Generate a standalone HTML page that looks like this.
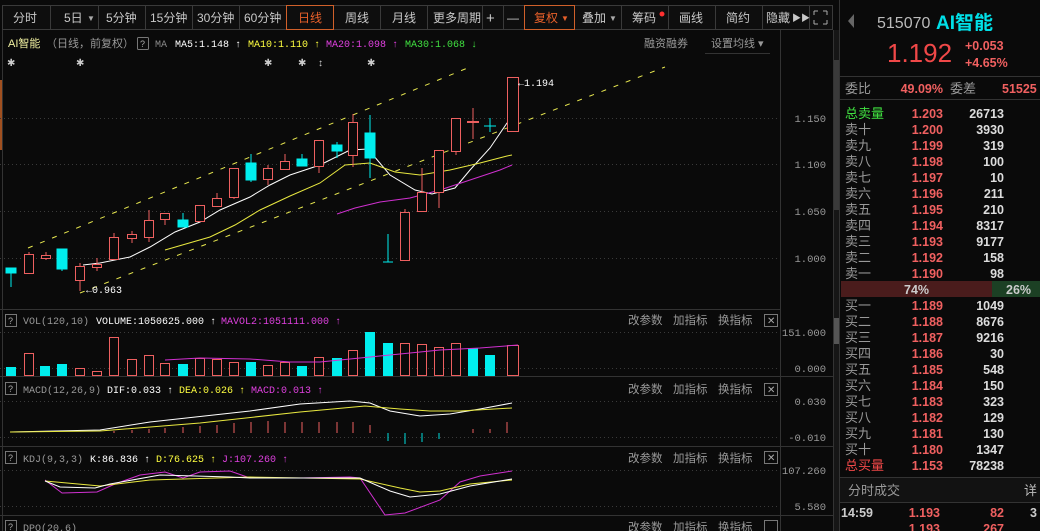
<!DOCTYPE html>
<html><head><meta charset="utf-8"><style>
html,body{margin:0;padding:0;background:#0a0a0a;width:1040px;height:531px;overflow:hidden}
svg{display:block}
text{font-family:"Liberation Sans","Noto Sans CJK SC",sans-serif}
.m text, text.m{font-family:"Liberation Mono","Noto Sans CJK SC",monospace}
</style></head><body>
<svg width="1040" height="531" viewBox="0 0 1040 531">
<rect width="1040" height="531" fill="#0a0a0a"/>
<!-- toolbar -->
<g stroke="#3a3a3a" fill="#0e0e0e">
<rect x="2.5" y="5.5" width="830" height="24"/>
</g>
<g stroke="#3a3a3a">
<line x1="50.5" y1="6" x2="50.5" y2="29"/><line x1="98.5" y1="6" x2="98.5" y2="29"/><line x1="145.5" y1="6" x2="145.5" y2="29"/><line x1="192.5" y1="6" x2="192.5" y2="29"/><line x1="239.5" y1="6" x2="239.5" y2="29"/><line x1="333.5" y1="6" x2="333.5" y2="29"/><line x1="380.5" y1="6" x2="380.5" y2="29"/><line x1="427.5" y1="6" x2="427.5" y2="29"/><line x1="482.5" y1="6" x2="482.5" y2="29"/><line x1="503.5" y1="6" x2="503.5" y2="29"/><line x1="621.5" y1="6" x2="621.5" y2="29"/><line x1="668.5" y1="6" x2="668.5" y2="29"/><line x1="715.5" y1="6" x2="715.5" y2="29"/><line x1="762.5" y1="6" x2="762.5" y2="29"/><line x1="809.5" y1="6" x2="809.5" y2="29"/>
</g>
<rect x="286.5" y="5.5" width="47" height="24" fill="none" stroke="#d0602a"/>
<rect x="524.5" y="5.5" width="50" height="24" fill="none" stroke="#d0602a"/>
<g font-size="12" fill="#c8c8c8">
<text x="13" y="22">分时</text>
<text x="64" y="22">5日</text><text x="87" y="21" font-size="8" fill="#aaa">▼</text>
<text x="106" y="22">5分钟</text>
<text x="150" y="22">15分钟</text>
<text x="197" y="22">30分钟</text>
<text x="244" y="22">60分钟</text>
<text x="298" y="22" fill="#e8602a">日线</text>
<text x="345" y="22">周线</text>
<text x="392" y="22">月线</text>
<text x="433" y="22">更多周期</text>
<text x="486" y="23" font-size="15">+</text>
<text x="507" y="22">—</text>
<text x="534" y="22" fill="#e8602a">复权</text><text x="561" y="21" font-size="8" fill="#e8602a">▼</text>
<text x="582" y="22">叠加</text><text x="609" y="21" font-size="8" fill="#aaa">▼</text>
<text x="632" y="22">筹码</text>
<text x="679" y="22">画线</text>
<text x="726" y="22">简约</text>
<text x="766" y="22">隐藏</text><text x="792" y="21" font-size="9">▶▶</text>
</g>
<circle cx="662" cy="14" r="2.5" fill="#ff3030"/>
<g stroke="#aaa" fill="none" stroke-width="1"><path d="M814 11h4M814 11v4M827 11h-4M827 11v4M814 24h4M814 24v-4M827 24h-4M827 24v-4"/></g>

<!-- chart frame lines -->
<g stroke="#333">
<line x1="780.5" y1="30" x2="780.5" y2="531"/>
<line x1="833.5" y1="30" x2="833.5" y2="531"/>
<line x1="839.5" y1="0" x2="839.5" y2="531"/>
<line x1="0" y1="309.5" x2="780" y2="309.5"/>
<line x1="0" y1="376.5" x2="833" y2="376.5"/>
<line x1="0" y1="446.5" x2="833" y2="446.5"/>
<line x1="0" y1="515.5" x2="833" y2="515.5"/>
<line x1="2.5" y1="30" x2="2.5" y2="531"/>
</g>
<rect x="834" y="30" width="5" height="501" fill="#161616"/>
<rect x="834" y="60" width="5" height="150" fill="#3a3a3a"/>
<rect x="834" y="318" width="5" height="26" fill="#555"/>
<rect x="0" y="80" width="2" height="70" fill="#a05020"/>

<!-- header -->
<text x="8" y="47" font-size="11" fill="#f0f0a0">AI智能</text>
<text x="46" y="47" font-size="11" fill="#999">（日线，前复权）</text>
<rect x="137.5" y="37.5" width="11" height="12" fill="none" stroke="#777" rx="1"/>
<text x="140" y="47" font-size="9" fill="#aaa">?</text>
<g class="m" font-size="10">
<text x="155" y="47" fill="#888">MA</text>
<text x="175" y="47" fill="#fff">MA5:1.148 ↑</text>
<text x="248" y="47" fill="#ffff40">MA10:1.110 ↑</text>
<text x="326" y="47" fill="#e040e0">MA20:1.098 ↑</text>
<text x="405" y="47" fill="#40e040">MA30:1.068 ↓</text>
</g>
<text x="644" y="47" font-size="11" fill="#999">融资融券</text>
<text x="711" y="47" font-size="11" fill="#999">设置均线 ▾</text>
<line x1="705" y1="53.5" x2="770" y2="53.5" stroke="#333"/>
<g fill="#ccc" font-size="10"><text x="7" y="66">✱</text><text x="76" y="66">✱</text><text x="264" y="66">✱</text><text x="298" y="66">✱</text><text x="318" y="66">↕</text><text x="367" y="66">✱</text></g>

<!-- grid main -->
<g stroke="#3a3a3a" stroke-dasharray="1,3">
<line x1="0" y1="118.5" x2="780" y2="118.5"/><line x1="0" y1="164.5" x2="780" y2="164.5"/><line x1="0" y1="211.5" x2="780" y2="211.5"/><line x1="0" y1="258.5" x2="780" y2="258.5"/>
<line x1="0" y1="332.5" x2="780" y2="332.5"/><line x1="0" y1="368.5" x2="780" y2="368.5"/>
<line x1="0" y1="401.5" x2="780" y2="401.5"/><line x1="0" y1="437.5" x2="780" y2="437.5"/>
<line x1="0" y1="470.5" x2="780" y2="470.5"/><line x1="0" y1="506.5" x2="780" y2="506.5"/>
</g>
<g class="m" font-size="10.5" fill="#999" text-anchor="end">
<text x="826" y="122">1.150</text><text x="826" y="168">1.100</text><text x="826" y="215">1.050</text><text x="826" y="262">1.000</text>
<text x="826" y="336">151.000</text><text x="826" y="372">0.000</text>
<text x="826" y="405">0.030</text><text x="826" y="441">-0.010</text>
<text x="826" y="474">107.260</text><text x="826" y="510">5.580</text>
</g>

<!-- channel lines -->
<g stroke="#e8e850" stroke-dasharray="5,8" fill="none">
<line x1="28" y1="248" x2="470" y2="67"/>
<line x1="80" y1="293" x2="665" y2="67"/>
</g>

<!-- MA lines -->
<polyline fill="none" stroke="#fff" points="83,265 100,263 130,257 150,247 175,232 200,222 220,210 250,197 270,185 290,175 320,165 350,150 368,149 390,175 415,190 432,194 455,188 470,170 490,148 507,123 515,120"/>
<polyline fill="none" stroke="#e8e840" points="165,250 210,237 235,225 260,210 290,196 320,183 345,165 370,163 395,172 420,175 450,170 480,163 507,156 512,155"/>
<polyline fill="none" stroke="#d030d0" points="337,214 355,208 380,202 410,198 440,190 470,180 500,170 512,165"/>

<!-- candles -->
<g stroke="#ee6060" fill="#0a0a0a">
<line x1="29" y1="252" x2="29" y2="273"/><rect x="24.5" y="254.5" width="9" height="19"/>
<line x1="46" y1="252" x2="46" y2="260"/><rect x="41.5" y="255.5" width="9" height="3"/>
<line x1="80" y1="263" x2="80" y2="291"/><rect x="75.5" y="266.5" width="9" height="14"/>
<line x1="97" y1="258" x2="97" y2="271"/><rect x="92.5" y="264.5" width="9" height="3"/>
<line x1="114" y1="233" x2="114" y2="259"/><rect x="109.5" y="237.5" width="9" height="22"/>
<line x1="132" y1="231" x2="132" y2="243"/><rect x="127.5" y="234.5" width="9" height="4"/>
<line x1="149" y1="210" x2="149" y2="242"/><rect x="144.5" y="220.5" width="9" height="17"/>
<line x1="165" y1="213" x2="165" y2="225"/><rect x="160.5" y="213.5" width="9" height="6"/>
<line x1="200" y1="205" x2="200" y2="221"/><rect x="195.5" y="205.5" width="9" height="16"/>
<line x1="217" y1="193" x2="217" y2="206"/><rect x="212.5" y="198.5" width="9" height="8"/>
<line x1="234" y1="168" x2="234" y2="199"/><rect x="229.5" y="168.5" width="9" height="29"/>
<line x1="268" y1="165" x2="268" y2="185"/><rect x="263.5" y="168.5" width="9" height="11"/>
<line x1="285" y1="154" x2="285" y2="169"/><rect x="280.5" y="161.5" width="9" height="8"/>
<line x1="319" y1="140" x2="319" y2="173"/><rect x="314.5" y="140.5" width="9" height="26"/>
<line x1="353" y1="114" x2="353" y2="167"/><rect x="348.5" y="122.5" width="9" height="33"/>
<line x1="405" y1="209" x2="405" y2="260"/><rect x="400.5" y="212.5" width="9" height="48"/>
<line x1="422" y1="168" x2="422" y2="211"/><rect x="417.5" y="192.5" width="9" height="19"/>
<line x1="439" y1="150" x2="439" y2="208"/><rect x="434.5" y="150.5" width="9" height="42"/>
<line x1="456" y1="118" x2="456" y2="155"/><rect x="451.5" y="118.5" width="9" height="33"/>
<line x1="473" y1="108" x2="473" y2="139"/><rect x="467.5" y="121.5" width="11" height="1"/>
<rect x="507.5" y="77.5" width="11" height="54"/>
</g>
<g fill="#00eeee" stroke="#00eeee">
<line x1="11" y1="268" x2="11" y2="287"/><rect x="6" y="268" width="10" height="5"/>
<line x1="62" y1="249" x2="62" y2="271"/><rect x="57" y="249" width="10" height="20"/>
<line x1="183" y1="213" x2="183" y2="227"/><rect x="178" y="220" width="10" height="7"/>
<line x1="251" y1="154" x2="251" y2="182"/><rect x="246" y="163" width="10" height="17"/>
<line x1="302" y1="154" x2="302" y2="166"/><rect x="297" y="159" width="10" height="7"/>
<line x1="337" y1="142" x2="337" y2="158"/><rect x="332" y="145" width="10" height="6"/>
<line x1="370" y1="115" x2="370" y2="178"/><rect x="365" y="133" width="10" height="25"/>
<line x1="388" y1="234" x2="388" y2="262"/><line x1="383" y1="262" x2="393" y2="262"/>
<line x1="490" y1="118" x2="490" y2="132"/><line x1="484" y1="126" x2="496" y2="126"/>
</g>
<text x="86" y="293" class="m" font-size="10" fill="#fff">←0.963</text>
<text x="518" y="86" class="m" font-size="10" fill="#fff">←1.194</text>

<!-- VOL -->
<rect x="5.5" y="314.5" width="11" height="12" fill="none" stroke="#777"/><text x="8" y="324" font-size="9" fill="#aaa">?</text>
<g class="m" font-size="10">
<text x="23" y="324" fill="#999">VOL(120,10)</text>
<text x="96" y="324" fill="#fff">VOLUME:1050625.000 ↑</text>
<text x="221" y="324" fill="#e040e0">MAVOL2:1051111.000 ↑</text>
</g>
<g font-size="11.5" fill="#999"><text x="628" y="324">改参数</text><text x="673" y="324">加指标</text><text x="718" y="324">换指标</text></g>
<rect x="764.5" y="314.5" width="13" height="12" fill="none" stroke="#777"/><text x="767" y="324" font-size="10" fill="#aaa">✕</text>
<g fill="#0a0a0a" stroke="#ee6060">
<rect x="24.5" y="353.5" width="9" height="22"/><rect x="75.5" y="368.5" width="9" height="7"/><rect x="92.5" y="371.5" width="9" height="4"/><rect x="109.5" y="337.5" width="9" height="38"/><rect x="127.5" y="359.5" width="9" height="16"/><rect x="144.5" y="355.5" width="9" height="20"/><rect x="160.5" y="363.5" width="9" height="12"/><rect x="195.5" y="358.5" width="9" height="17"/><rect x="212.5" y="359.5" width="9" height="16"/><rect x="229.5" y="362.5" width="9" height="13"/><rect x="263.5" y="365.5" width="9" height="10"/><rect x="280.5" y="362.5" width="9" height="13"/><rect x="314.5" y="357.5" width="9" height="18"/><rect x="348.5" y="350.5" width="9" height="25"/><rect x="400.5" y="343.5" width="9" height="32"/><rect x="417.5" y="344.5" width="9" height="31"/><rect x="434.5" y="347.5" width="9" height="28"/><rect x="451.5" y="343.5" width="9" height="32"/><rect x="507.5" y="345.5" width="11" height="30"/>
</g>
<g fill="#00eeee">
<rect x="6" y="367" width="10" height="9"/><rect x="40" y="366" width="10" height="10"/><rect x="57" y="364" width="10" height="12"/><rect x="178" y="364" width="10" height="12"/><rect x="246" y="362" width="10" height="14"/><rect x="297" y="366" width="10" height="10"/><rect x="332" y="358" width="10" height="18"/><rect x="365" y="332" width="10" height="44"/><rect x="383" y="343" width="10" height="33"/><rect x="468" y="348" width="10" height="28"/><rect x="485" y="355" width="10" height="21"/>
</g>
<polyline fill="none" stroke="#d030d0" points="165,360 200,358 250,359 290,362 320,362 340,360 370,357 400,354 440,350 480,348 518,345"/>

<!-- MACD -->
<rect x="5.5" y="382.5" width="11" height="12" fill="none" stroke="#777"/><text x="8" y="392" font-size="9" fill="#aaa">?</text>
<g class="m" font-size="10">
<text x="23" y="393" fill="#999">MACD(12,26,9)</text>
<text x="107" y="393" fill="#fff">DIF:0.033 ↑</text>
<text x="179" y="393" fill="#ffff40">DEA:0.026 ↑</text>
<text x="251" y="393" fill="#e040e0">MACD:0.013 ↑</text>
</g>
<g font-size="11.5" fill="#999"><text x="628" y="393">改参数</text><text x="673" y="393">加指标</text><text x="718" y="393">换指标</text></g>
<rect x="764.5" y="383.5" width="13" height="12" fill="none" stroke="#777"/><text x="767" y="393" font-size="10" fill="#aaa">✕</text>
<g stroke="#ee6060">
<path d="M114 433v-2M132 433v-3M149 433v-4M165 433v-5M183 433v-6M200 433v-7M217 433v-8M234 433v-10M251 433v-11M268 433v-12M285 433v-11M302 433v-11M319 433v-11M337 433v-11M353 433v-11M370 433v-8M473 433v-4M490 433v-4M507 433v-11"/>
</g>
<g stroke="#00dddd"><path d="M388 433v8M405 433v11M422 433v9M439 433v6"/></g>
<polyline fill="none" stroke="#fff" points="10,432 100,430 150,422 250,411 300,404 350,401 370,403 390,411 420,416 450,414 480,409 512,403"/>
<polyline fill="none" stroke="#e8e840" points="10,432 100,431 200,423 300,412 365,406 400,409 430,411 460,411 512,408"/>

<!-- KDJ -->
<rect x="5.5" y="451.5" width="11" height="12" fill="none" stroke="#777"/><text x="8" y="461" font-size="9" fill="#aaa">?</text>
<g class="m" font-size="10">
<text x="23" y="462" fill="#999">KDJ(9,3,3)</text>
<text x="90" y="462" fill="#fff">K:86.836 ↑</text>
<text x="156" y="462" fill="#ffff40">D:76.625 ↑</text>
<text x="222" y="462" fill="#e040e0">J:107.260 ↑</text>
</g>
<g font-size="11.5" fill="#999"><text x="628" y="462">改参数</text><text x="673" y="462">加指标</text><text x="718" y="462">换指标</text></g>
<rect x="764.5" y="451.5" width="13" height="12" fill="none" stroke="#777"/><text x="767" y="461" font-size="10" fill="#aaa">✕</text>
<polyline fill="none" stroke="#d030d0" points="45,480 62,493 97,492 115,484 140,475 165,472 183,478 200,472 230,471 250,478 270,478 300,478 350,477 360,478 385,515 405,513 440,500 460,482 480,476 512,471"/>
<polyline fill="none" stroke="#e8e840" points="45,481 100,486 150,480 250,477 360,479 400,488 420,492 440,491 470,484 512,480"/>
<polyline fill="none" stroke="#fff" points="45,481 60,487 95,488 110,484 160,475 230,477 250,478 350,478 360,478 390,491 410,497 440,494 470,486 512,479"/>

<!-- DPO -->
<rect x="5.5" y="520.5" width="11" height="12" fill="none" stroke="#777"/><text x="8" y="530" font-size="9" fill="#aaa">?</text>
<text x="23" y="531" class="m" font-size="10" fill="#999">DPO(20,6)</text>
<g font-size="11.5" fill="#999"><text x="628" y="531">改参数</text><text x="673" y="531">加指标</text><text x="718" y="531">换指标</text></g>
<rect x="764.5" y="520.5" width="13" height="12" fill="none" stroke="#777"/>

<!-- right panel -->
<rect x="840" y="0" width="200" height="531" fill="#0a0a0a"/>
<path d="M854 14l-6 7 6 7z" fill="#666"/>
<text x="877" y="28" font-size="16" fill="#bbb">515070</text>
<text x="936" y="29" font-size="19" font-weight="bold" fill="#00e0e8">AI智能</text>
<text x="887" y="62" font-size="26" fill="#f04848">1.192</text>
<text x="965" y="50" font-size="12.5" font-weight="bold" fill="#f06060">+0.053</text>
<text x="965" y="67" font-size="12.5" font-weight="bold" fill="#f06060">+4.65%</text>
<line x1="840" y1="76.5" x2="1040" y2="76.5" stroke="#333"/>
<text x="845" y="93" font-size="13" fill="#999">委比</text>
<text x="943" y="93" font-size="12.5" font-weight="bold" fill="#f06060" text-anchor="end">49.09%</text>
<text x="950" y="93" font-size="13" fill="#999">委差</text>
<text x="1002" y="93" font-size="12.5" font-weight="bold" fill="#f06060">51525</text>
<line x1="840" y1="99.5" x2="1040" y2="99.5" stroke="#333"/>
<g font-size="13" fill="#999">
<text x="845" y="118" fill="#40e040">总卖量</text>
<text x="845" y="134">卖十</text><text x="845" y="150">卖九</text><text x="845" y="166">卖八</text><text x="845" y="182">卖七</text><text x="845" y="198">卖六</text><text x="845" y="214">卖五</text><text x="845" y="230">卖四</text><text x="845" y="246">卖三</text><text x="845" y="262">卖二</text><text x="845" y="278">卖一</text>
<text x="845" y="310">买一</text><text x="845" y="326">买二</text><text x="845" y="342">买三</text><text x="845" y="358">买四</text><text x="845" y="374">买五</text><text x="845" y="390">买六</text><text x="845" y="406">买七</text><text x="845" y="422">买八</text><text x="845" y="438">买九</text><text x="845" y="454">买十</text>
<text x="845" y="470" fill="#f04848">总买量</text>
</g>
<g font-size="12.5" font-weight="bold" fill="#f06060" text-anchor="end">
<text x="943" y="118">1.203</text><text x="943" y="134">1.200</text><text x="943" y="150">1.199</text><text x="943" y="166">1.198</text><text x="943" y="182">1.197</text><text x="943" y="198">1.196</text><text x="943" y="214">1.195</text><text x="943" y="230">1.194</text><text x="943" y="246">1.193</text><text x="943" y="262">1.192</text><text x="943" y="278">1.190</text>
<text x="943" y="310">1.189</text><text x="943" y="326">1.188</text><text x="943" y="342">1.187</text><text x="943" y="358">1.186</text><text x="943" y="374">1.185</text><text x="943" y="390">1.184</text><text x="943" y="406">1.183</text><text x="943" y="422">1.182</text><text x="943" y="438">1.181</text><text x="943" y="454">1.180</text><text x="943" y="470">1.153</text>
</g>
<g font-size="12.5" font-weight="bold" fill="#ddd" text-anchor="end">
<text x="1004" y="118">26713</text><text x="1004" y="134">3930</text><text x="1004" y="150">319</text><text x="1004" y="166">100</text><text x="1004" y="182">10</text><text x="1004" y="198">211</text><text x="1004" y="214">210</text><text x="1004" y="230">8317</text><text x="1004" y="246">9177</text><text x="1004" y="262">158</text><text x="1004" y="278">98</text>
<text x="1004" y="310">1049</text><text x="1004" y="326">8676</text><text x="1004" y="342">9216</text><text x="1004" y="358">30</text><text x="1004" y="374">548</text><text x="1004" y="390">150</text><text x="1004" y="406">323</text><text x="1004" y="422">129</text><text x="1004" y="438">130</text><text x="1004" y="454">1347</text><text x="1004" y="470">78238</text>
</g>
<rect x="841" y="281" width="151" height="16" fill="#4a1c1c"/>
<rect x="992" y="281" width="48" height="16" fill="#1c4024"/>
<text x="904" y="294" font-size="12.5" font-weight="bold" fill="#ccc">74%</text>
<text x="1006" y="294" font-size="12.5" font-weight="bold" fill="#ccc">26%</text>
<line x1="840" y1="477.5" x2="1040" y2="477.5" stroke="#333"/>
<rect x="840" y="478" width="200" height="24" fill="#121212"/>
<text x="848" y="495" font-size="13" fill="#999">分时成交</text>
<text x="1024" y="495" font-size="13" fill="#bbb">详</text>
<line x1="840" y1="502.5" x2="1040" y2="502.5" stroke="#333"/>
<text x="841" y="517" font-size="12.5" font-weight="bold" fill="#ccc">14:59</text>
<text x="940" y="517" font-size="12.5" font-weight="bold" fill="#f06060" text-anchor="end">1.193</text>
<text x="1004" y="517" font-size="12.5" font-weight="bold" fill="#f06060" text-anchor="end">82</text>
<text x="1030" y="517" font-size="12.5" font-weight="bold" fill="#ccc">3</text>
<text x="940" y="533" font-size="12.5" font-weight="bold" fill="#f06060" text-anchor="end">1.193</text>
<text x="1004" y="533" font-size="12.5" font-weight="bold" fill="#f06060" text-anchor="end">267</text>
</svg>
</body></html>
